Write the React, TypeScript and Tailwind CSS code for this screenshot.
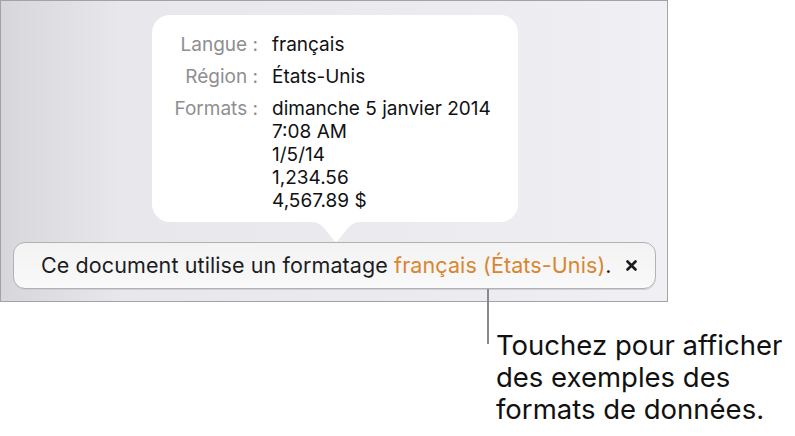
import React from "react";

const rows = [
  { label: "Langue :", values: ["français"] },
  { label: "Région :", values: ["États-Unis"] },
  {
    label: "Formats :",
    values: ["dimanche 5 janvier 2014", "7:08 AM", "1/5/14", "1,234.56", "4,567.89 $"],
  },
];

const App = () => {
  return (
    <div className="w-[795px] h-[436px] bg-white font-['Inter',sans-serif] overflow-hidden">
      <div className="w-[668px] h-[302px] border border-[#a3a3a6] bg-[linear-gradient(90deg,#d7d7db_0%,#e8e8ec_18%,#ebebef_60%,#f0f0f4_100%)] flex flex-col pl-[12px] pt-[14px]">
        {/* popover */}
        <div className="ml-[139px] w-[366px] h-[207px] bg-white rounded-[18px] pt-[18px] flex flex-col gap-[9px]">
          {rows.map((r) => (
            <div key={r.label} className="flex text-[19px] leading-[23px]">
              <div className="w-[106px] text-right text-[#8e8e93]">{r.label}</div>
              <div className="pl-[14px] text-[#111] flex flex-col">
                {r.values.map((v) => (
                  <span key={v}>{v}</span>
                ))}
              </div>
            </div>
          ))}
        </div>
        <svg width="52" height="20" viewBox="0 0 52 20" className="ml-[297px] block">
          <path d="M0 0 C8 0 10 2 14 6 L24 18.5 Q26 20.5 28 18.5 L38 6 C42 2 44 0 52 0 Z" fill="#fff" />
        </svg>
        {/* banner */}
        <div className="w-[643px] h-[47px] rounded-[12px] border border-[#b2b2b5] bg-[linear-gradient(180deg,#f3f3f4,#f9f9fa)] shadow-[0_1px_0_#d0d0d3] flex items-center pl-[27px] pr-[16px] text-[21.5px] text-[#1c1c1e]">
          <span className="tracking-[0.1px]">
            Ce document utilise un formatage{" "}
            <span className="text-[#d8862f]">français (États-Unis)</span>.
          </span>
          <svg width="11" height="11" viewBox="0 0 11 11" className="ml-auto mr-[2px]">
            <path d="M1.5 1.5 L9.5 9.5 M9.5 1.5 L1.5 9.5" stroke="#1c1c1e" strokeWidth="2.6" strokeLinecap="round" />
          </svg>
        </div>
      </div>
      {/* callout */}
      <div className="flex -mt-[13px] ml-[487px]">
        <div className="w-[2px] h-[55px] bg-[#8a8a8e]" />
        <div className="pl-[7px] pt-[40px] text-[27.5px] leading-[32px] text-[#111]">
          Touchez pour afficher
          <br />
          des exemples des
          <br />
          formats de données.
        </div>
      </div>
    </div>
  );
};

export default App;
